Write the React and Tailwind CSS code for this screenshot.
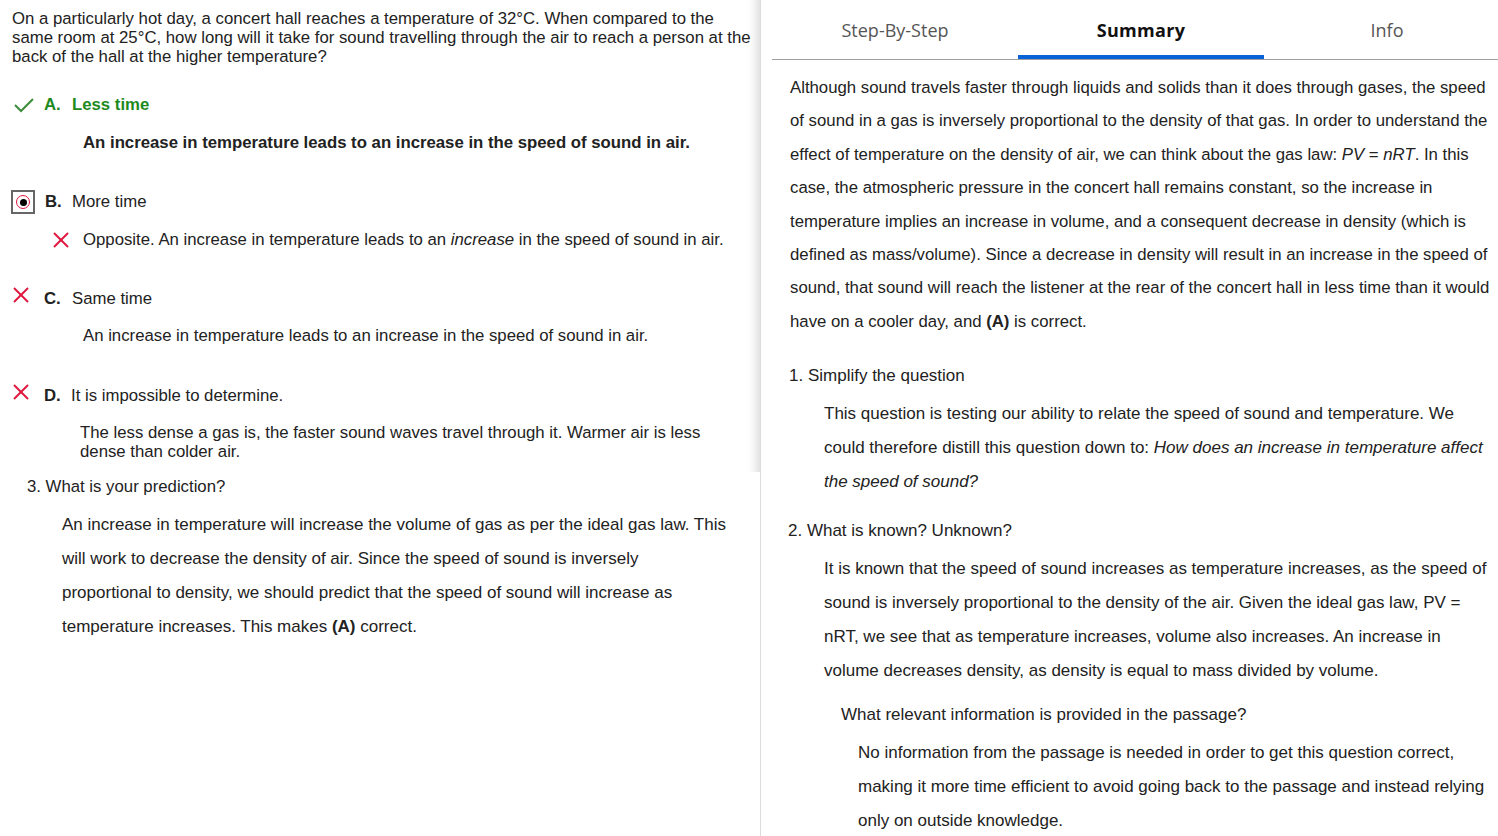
import React from "react";

const font = { fontFamily: '"Liberation Sans", Arial, sans-serif' };

function Check() {
  return (
    <svg width="22" height="16" viewBox="0 0 22 16" className="block">
      <polyline points="2,8 8,14 20,2" fill="none" stroke="#3c8c3c" strokeWidth="2" />
    </svg>
  );
}

function XMark({ size = 18 }) {
  return (
    <svg width={size} height={size} viewBox="0 0 18 18" className="block">
      <line x1="2" y1="2" x2="16" y2="16" stroke="#e0173f" strokeWidth="2" />
      <line x1="16" y1="2" x2="2" y2="16" stroke="#e0173f" strokeWidth="2" />
    </svg>
  );
}

function RadioBox() {
  return (
    <div className="w-[24px] h-[24px] border-2 border-[#666] flex items-center justify-center bg-white">
      <div className="w-[14px] h-[14px] rounded-full border-[1.5px] border-[#e0173f] flex items-center justify-center">
        <div className="w-[7px] h-[7px] rounded-full bg-black" />
      </div>
    </div>
  );
}

export default function App() {
  return (
    <div className="w-[1498px] h-[836px] overflow-hidden bg-white flex text-[#222] text-[16.75px]" style={font}>
      {/* Left column */}
      <div className="w-[760px] shrink-0 flex flex-col">
        <div className="h-[472px] shadow-[inset_-12px_0_10px_-8px_rgba(0,0,0,0.14)] pl-[12px] pt-[9px]">
          <p className="leading-[19px] w-[742px]">
            On a particularly hot day, a concert hall reaches a temperature of 32°C. When compared to the same room at 25°C, how long will it take for sound travelling through the air to reach a person at the back of the hall at the higher temperature?
          </p>

          <div className="mt-[27px] h-[24px] flex items-center">
            <div className="w-[32px] pl-[1px]"><Check /></div>
            <span className="font-bold text-[#1e8a1e] w-[28px]">A.</span>
            <span className="font-bold text-[#1e8a1e]">Less time</span>
          </div>
          <p className="mt-[16px] pl-[71px] leading-[19px] font-bold">
            An increase in temperature leads to an increase in the speed of sound in air.
          </p>

          <div className="mt-[38px] h-[24px] flex items-center -ml-[1px]">
            <div className="w-[34px]"><RadioBox /></div>
            <span className="font-bold w-[27px]">B.</span>
            <span>More time</span>
          </div>
          <div className="mt-[14px] h-[24px] flex items-center pl-[40px]">
            <div className="w-[31px]"><XMark /></div>
            <span>Opposite. An increase in temperature leads to an <i>increase</i> in the speed of sound in air.</span>
          </div>

          <div className="mt-[35px] h-[24px] flex items-center">
            <div className="w-[32px] -mt-[8px]"><XMark /></div>
            <span className="font-bold w-[28px]">C.</span>
            <span>Same time</span>
          </div>
          <p className="mt-[15px] pl-[71px] leading-[19px]">
            An increase in temperature leads to an increase in the speed of sound in air.
          </p>

          <div className="mt-[39px] h-[24px] flex items-center">
            <div className="w-[32px] -mt-[8px]"><XMark /></div>
            <span className="font-bold w-[27px]">D.</span>
            <span>It is impossible to determine.</span>
          </div>
          <p className="mt-[15px] ml-[68px] w-[640px] leading-[19px]">
            The less dense a gas is, the faster sound waves travel through it. Warmer air is less dense than colder air.
          </p>
        </div>

        <div className="pl-[27px] mt-[5px] leading-[19px]">3. What is your prediction?</div>
        <p className="mt-[12px] ml-[62px] w-[667px] leading-[34px] text-[17px]">
          An increase in temperature will increase the volume of gas as per the ideal gas law. This will work to decrease the density of air. Since the speed of sound is inversely proportional to density, we should predict that the speed of sound will increase as temperature increases. This makes <b>(A)</b> correct.
        </p>
      </div>

      {/* Right column */}
      <div className="flex-1 border-l border-[#dcdcdc] overflow-hidden pl-[11px]">
        <div className="border-b border-[#a0a0a0] w-[740px]">
          <div className="grid grid-cols-3 w-[738px] text-[18px]" style={{ fontFamily: '"Open Sans", sans-serif' }}>
            <div className="h-[59px] pt-[6px] flex items-center justify-center border-b-4 border-transparent text-[#555]">Step-By-Step</div>
            <div className="h-[59px] pt-[6px] flex items-center justify-center border-b-4 border-[#0a63d6] font-bold text-[#111] tracking-[0.3px]">Summary</div>
            <div className="h-[59px] pt-[6px] flex items-center justify-center border-b-4 border-transparent text-[#555]">Info</div>
          </div>
        </div>

        <div className="pr-[5px]">
          <p className="mt-[11px] ml-[18px] leading-[33.4px]">
            Although sound travels faster through liquids and solids than it does through gases, the speed of sound in a gas is inversely proportional to the density of that gas. In order to understand the effect of temperature on the density of air, we can think about the gas law: <i>PV</i> = <i>nRT</i>. In this case, the atmospheric pressure in the concert hall remains constant, so the increase in temperature implies an increase in volume, and a consequent decrease in density (which is defined as mass/volume). Since a decrease in density will result in an increase in the speed of sound, that sound will reach the listener at the rear of the concert hall in less time than it would have on a cooler day, and <b>(A)</b> is correct.
          </p>

          <div className="text-[17px]">
            <div className="mt-[26px] ml-[17px] leading-[24px]">1. Simplify the question</div>
            <p className="mt-[9px] ml-[52px] w-[666px] leading-[34px]">
              This question is testing our ability to relate the speed of sound and temperature. We could therefore distill this question down to: <i>How does an increase in temperature affect the speed of sound?</i>
            </p>

            <div className="mt-[20px] ml-[16px] leading-[24px]">2. What is known? Unknown?</div>
            <p className="mt-[9px] ml-[52px] w-[666px] leading-[34px]">
              It is known that the speed of sound increases as temperature increases, as the speed of sound is inversely proportional to the density of the air. Given the ideal gas law, PV = nRT, we see that as temperature increases, volume also increases. An increase in volume decreases density, as density is equal to mass divided by volume.
            </p>

            <div className="mt-[15px] ml-[69px] leading-[24px]">What relevant information is provided in the passage?</div>
            <p className="mt-[9px] ml-[86px] w-[632px] leading-[34px]">
              No information from the passage is needed in order to get this question correct, making it more time efficient to avoid going back to the passage and instead relying only on outside knowledge.
            </p>
          </div>
        </div>
      </div>
    </div>
  );
}
